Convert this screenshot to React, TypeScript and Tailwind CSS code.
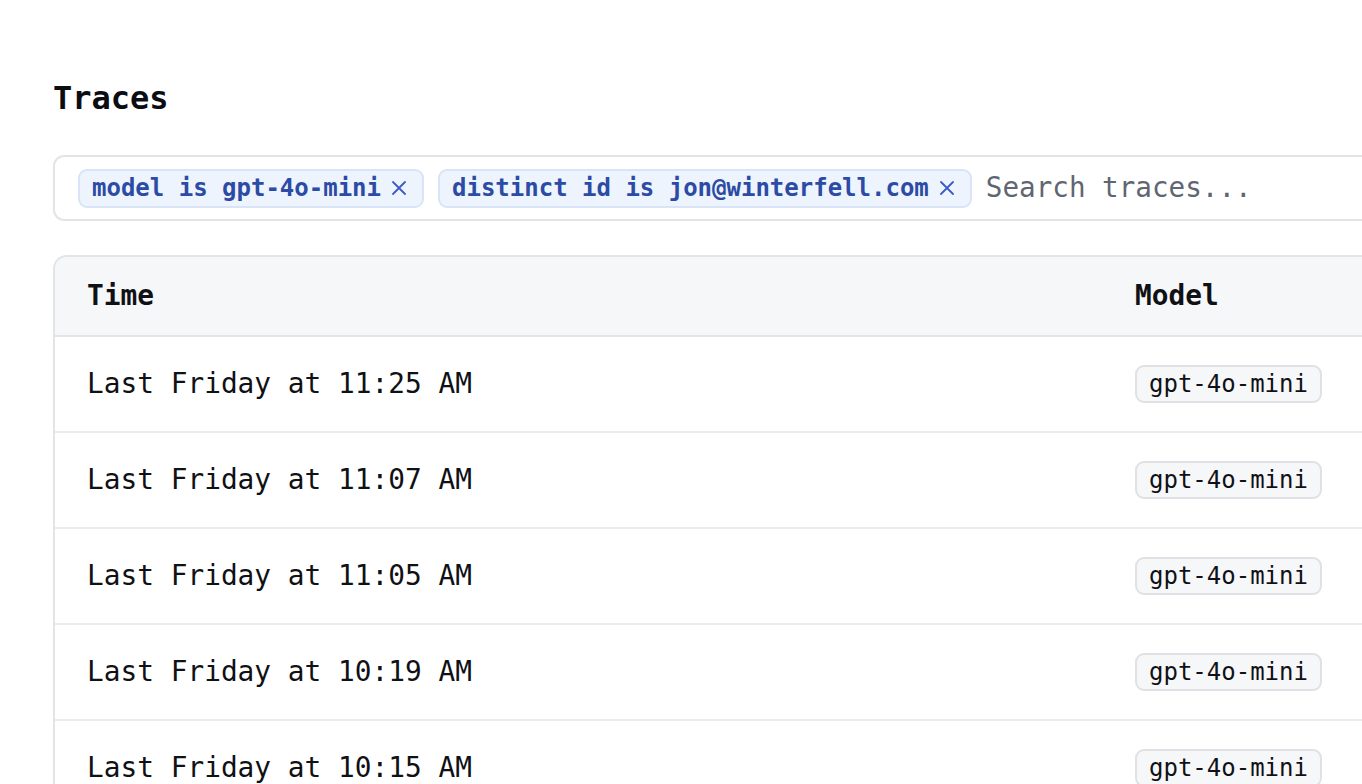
import React from "react";

const rows = [
  "Last Friday at 11:25 AM",
  "Last Friday at 11:07 AM",
  "Last Friday at 11:05 AM",
  "Last Friday at 10:19 AM",
  "Last Friday at 10:15 AM",
];

function XIcon() {
  return (
    <svg width="16" height="16" viewBox="0 0 16 16" className="shrink-0">
      <path d="M2 2 L14 14 M14 2 L2 14" stroke="#3a5bc4" strokeWidth="1.8" strokeLinecap="round" />
    </svg>
  );
}

function Chip({ label }: { label: string }) {
  return (
    <div className="flex h-[39px] shrink-0 items-center gap-[10px] rounded-[9px] border-2 border-[#d9e4f7] bg-[#eef4fe] pl-[12px] pr-[15px]">
      <span className="text-[24px] font-bold leading-none text-[#2c4ba4]">{label}</span>
      <XIcon />
    </div>
  );
}

export default function App() {
  return (
    <div
      className="h-[784px] w-[1362px] overflow-hidden bg-white pl-[53px] text-[#0f1115]"
      style={{ fontFamily: '"DejaVu Sans Mono", "Liberation Mono", monospace' }}
    >
      <div className="w-[1420px]">
        <h1 className="pt-[78px] text-[32px] font-bold leading-[40px] text-[#0b0d12]">Traces</h1>
        <div className="mt-[37px] flex h-[66px] items-center gap-[14px] rounded-[11px] border-2 border-[#e3e4e6] pl-[23px]">
          <Chip label="model is gpt-4o-mini" />
          <Chip label="distinct id is jon@winterfell.com" />
          <span className="text-[27.6px] leading-none text-[#5f6672]">Search traces...</span>
        </div>
        <div className="mt-[34px] rounded-t-[14px] border-2 border-b-0 border-[#e3e4e6]">
          <div className="flex h-[80px] items-center rounded-t-[12px] border-b-2 border-[#e3e4e6] bg-[#f6f7f9] pl-[32px]">
            <div className="w-[1048px] text-[27.8px] font-bold leading-none">Time</div>
            <div className="text-[27.8px] font-bold leading-none">Model</div>
          </div>
          {rows.map((r) => (
            <div key={r} className="flex h-[96px] items-center border-b-2 border-[#ececee] pl-[32px]">
              <div className="w-[1048px] text-[27.8px] leading-none">{r}</div>
              <div className="flex h-[38px] items-center rounded-[9px] border-2 border-[#dfe1e4] bg-[#f6f7f9] px-[12px]">
                <span className="text-[24px] leading-none">gpt-4o-mini</span>
              </div>
            </div>
          ))}
        </div>
      </div>
    </div>
  );
}
